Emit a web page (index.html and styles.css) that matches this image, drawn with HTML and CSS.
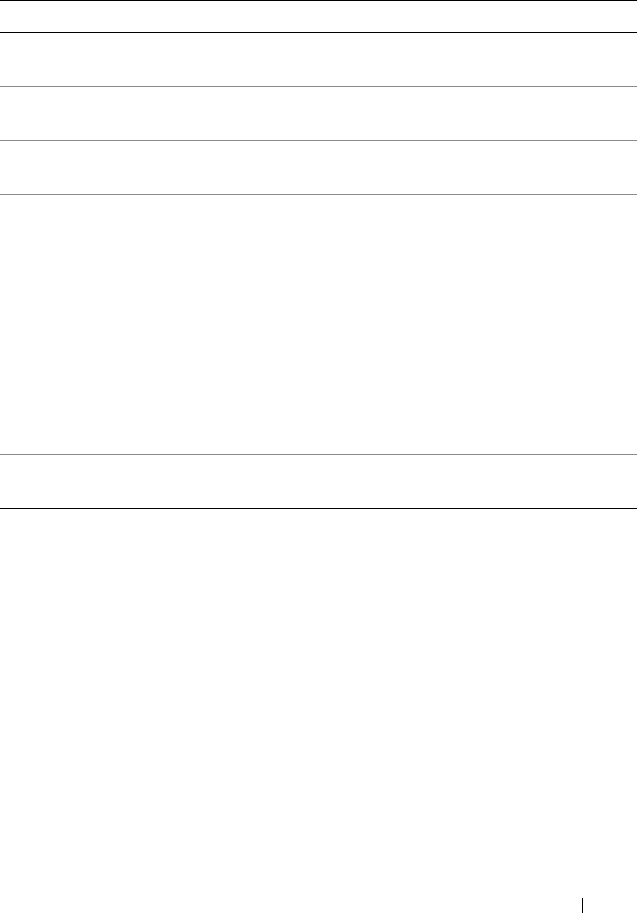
FILE: index.html
```html
<!DOCTYPE html>
<html lang="en">
<head>
<meta charset="utf-8">
<title>Table</title>
<link rel="stylesheet" href="styles.css">
</head>
<body>
<div class="page">
  <div class="table">
    <div class="row head"></div>
    <div class="row"></div>
    <div class="row"></div>
    <div class="row"></div>
    <div class="row tall"></div>
    <div class="row last"></div>
  </div>
  <div class="footer">
    <span class="bar"></span>
  </div>
</div>
</body>
</html>
```
FILE: styles.css
```css
html, body {
  margin: 0;
  padding: 0;
  background: #ffffff;
  font-family: "Liberation Sans", Arial, sans-serif;
}
.page {
  display: flex;
  flex-direction: column;
  height: 913px;
  overflow: hidden;
}
.table {
  width: 637px;
  border-top: 1px solid #000000;
  display: flex;
  flex-direction: column;
}
.row {
  height: 53px;
  border-bottom: 1px solid #8a8a8a;
}
.row.head {
  height: 31px;
  border-bottom: 1px solid #000000;
}
.row.tall {
  height: 259px;
}
.row.last {
  border-bottom: 1px solid #000000;
}
.footer {
  margin-top: auto;
  display: flex;
  justify-content: flex-end;
  padding-right: 58px;
}
.bar {
  display: block;
  width: 1px;
  height: 15px;
  background: #000000;
}
```
